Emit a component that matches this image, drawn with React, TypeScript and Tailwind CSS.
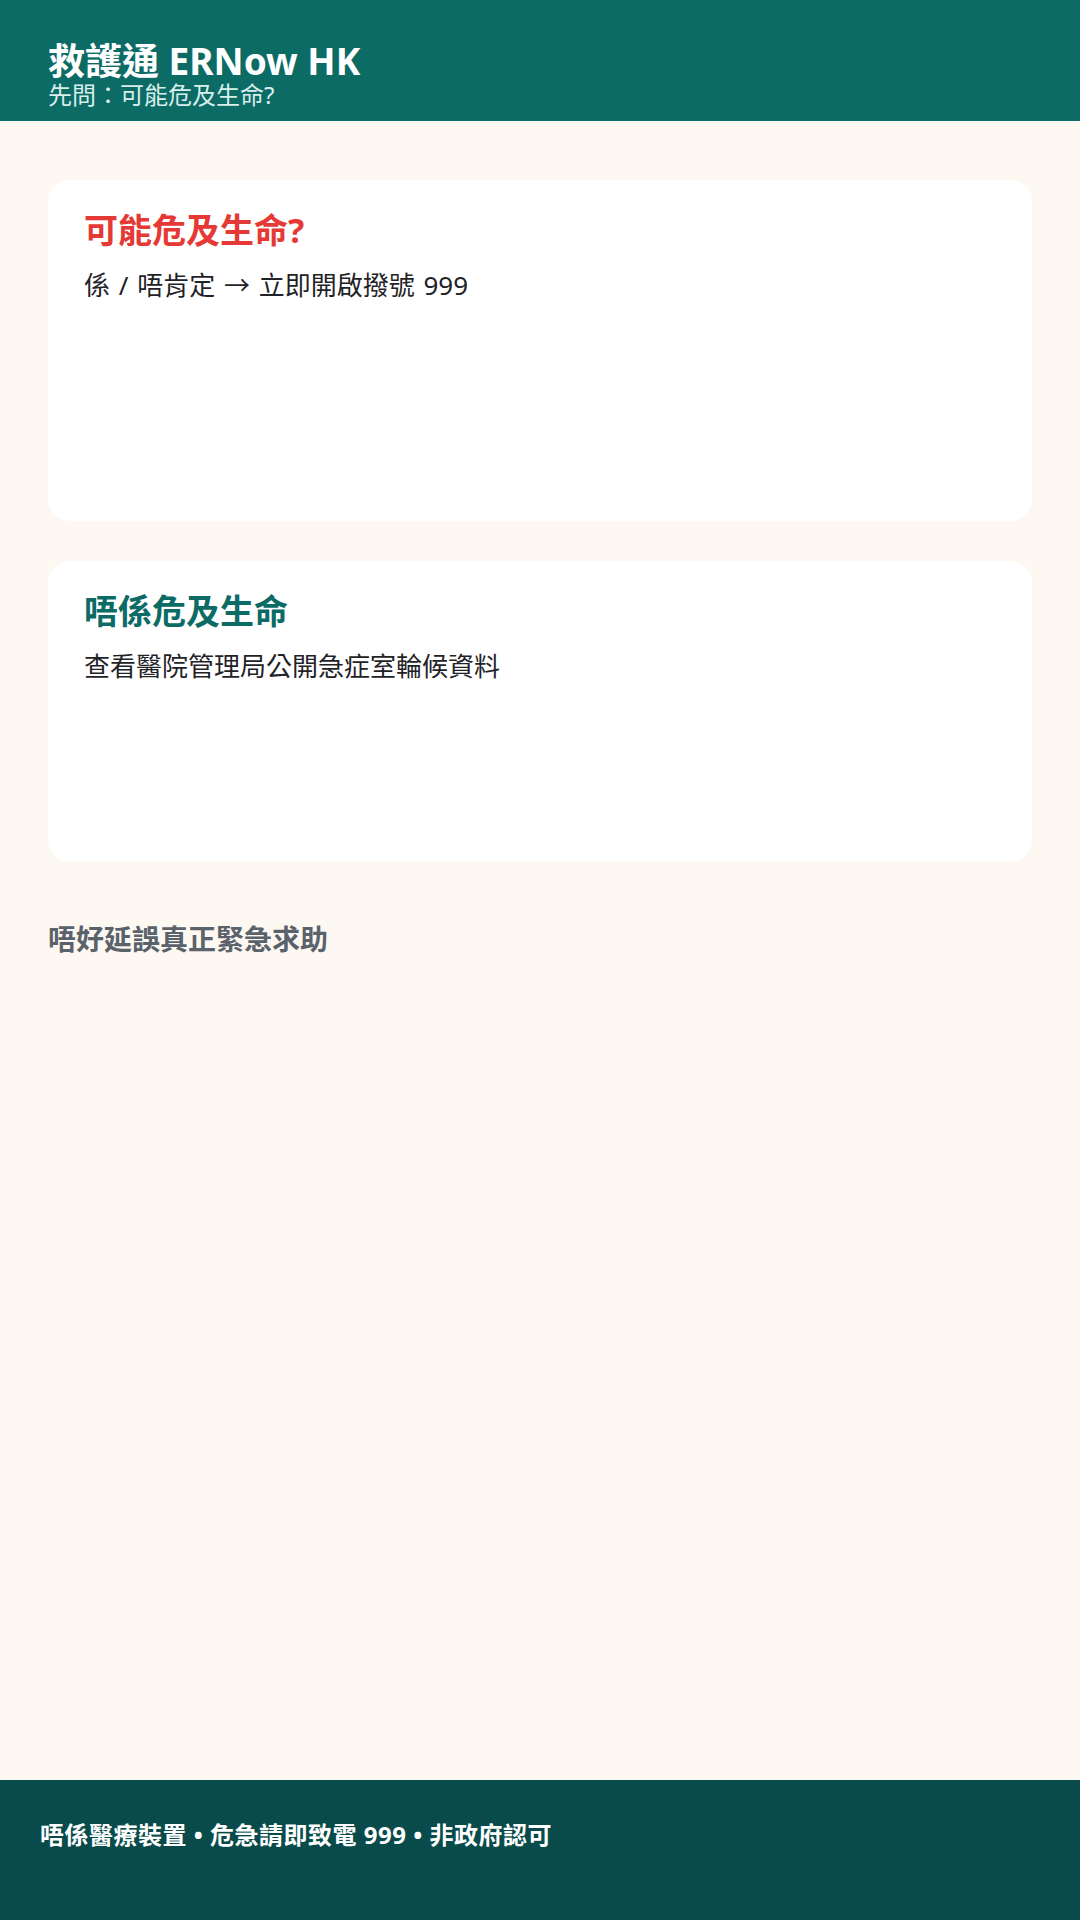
const font = { fontFamily: '"Noto Sans", "Noto Sans CJK TC", sans-serif' };

type CardProps = {
	title: string;
	text: string;
	titleClass: string;
	heightClass: string;
};

function ChoiceCard({ title, text, titleClass, heightClass }: CardProps) {
	return (
		<div className={`bg-white rounded-[22px] px-[36px] pt-[27px] ${heightClass}`}>
			<h2 className={`text-[34px] font-bold leading-[1.4] ${titleClass}`}>{title}</h2>
			<p className="mt-[12px] text-[26px] leading-[1.4] text-[#1f2328] [word-spacing:2px]">{text}</p>
		</div>
	);
}

export default function App() {
	return (
		<div className="min-h-[1920px] flex flex-col bg-[#fdf8f2]" style={font}>
			<header className="bg-[#0d6b66] h-[121px] px-12 pt-[39px] text-white">
				<h1 className="text-[37px] font-bold leading-[1.2]">救護通 ERNow HK</h1>
				<p className="text-[24px] leading-none text-[#d8efec]">先問：可能危及生命?</p>
			</header>

			<main className="flex-1 px-12 pt-[59px] flex flex-col gap-[40px]">
				<ChoiceCard
					title="可能危及生命?"
					text="係 / 唔肯定 → 立即開啟撥號 999"
					titleClass="text-[#e53935]"
					heightClass="h-[341px]"
				/>
				<ChoiceCard
					title="唔係危及生命"
					text="查看醫院管理局公開急症室輪候資料"
					titleClass="text-[#0d6b66]"
					heightClass="h-[301px]"
				/>
				<h3 className="mt-[18px] text-[28px] font-bold leading-[1.4] text-[#5a636b]">唔好延誤真正緊急求助</h3>
			</main>

			<footer className="bg-[#094b4a] h-[140px] px-[40px] pt-[38px]">
				<p className="text-[24px] font-bold leading-[1.4] tracking-[0.5px] text-white">唔係醫療裝置 • 危急請即致電 999 • 非政府認可</p>
			</footer>
		</div>
	);
}
